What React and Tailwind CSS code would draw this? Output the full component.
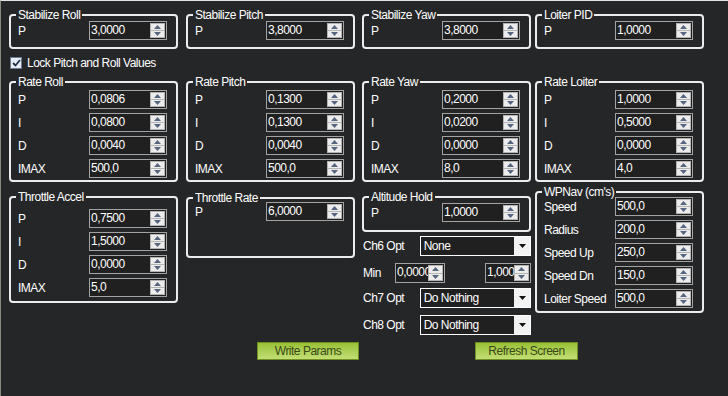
function Arrow({ up }) {
  return (
    <svg width="7" height="4" viewBox="0 0 7 4" className="block">
      <path d={up ? "M0 4 L3.5 0 L7 4 Z" : "M0 0 L3.5 4 L7 0 Z"} fill="#55657f" />
    </svg>
  );
}

function Spin({ value, w = "w-[78px]", h = "h-[19px]" }) {
  return (
    <div className={`flex ${w} ${h} shrink-0 border border-[#a3a3a3] bg-[#202020]`}>
      <span className="flex-1 overflow-hidden whitespace-nowrap pl-[1px] leading-[17px] text-white">{value}</span>
      <div className="my-[1px] mr-[1px] flex w-[15px] flex-col">
        <div className="flex flex-1 items-center justify-center border border-[#b4b4b4] bg-[#ececec]">
          <Arrow up />
        </div>
        <div className="flex flex-1 items-center justify-center border border-t-0 border-[#b4b4b4] bg-[#ececec]">
          <Arrow />
        </div>
      </div>
    </div>
  );
}

function Row({ label, value }) {
  return (
    <div className="flex items-center">
      <span className="w-[73px] pl-[2px]">{label}</span>
      <Spin value={value} />
    </div>
  );
}

function Group({ title, className = "", children }) {
  return (
    <fieldset className={`w-[169px] shrink-0 rounded-[4px] border-2 border-[#ececec] pl-[5px] pr-[9px] ${className}`}>
      <legend className="px-[2px] leading-[12px]">{title}</legend>
      {children}
    </fieldset>
  );
}

function Select({ value }) {
  return (
    <div className="flex h-[20px] w-[112px] border border-white bg-[#202020]">
      <span className="flex-1 pl-[3px] leading-[18px]">{value}</span>
      <div className="flex w-[16px] items-center justify-center bg-[#f2f2f2]">
        <svg width="7" height="4" viewBox="0 0 7 4">
          <path d="M0 0 L3.5 4 L7 0 Z" fill="#111111" />
        </svg>
      </div>
    </div>
  );
}

function GreenButton({ children, className = "" }) {
  return (
    <div
      className={`h-[18px] border border-[#6f8f24] bg-linear-to-b from-[#98c133] to-[#c3de74] text-center leading-[16px] text-[#3c4a1a] ${className}`}
    >
      {children}
    </div>
  );
}

export default function App() {
  return (
    <div className="h-[396px] w-[728px] overflow-hidden border-l border-t border-l-[#8a8a80] border-t-[#e4e4e4] bg-[#252628] font-['Liberation_Sans',Arial,sans-serif] text-[12px] tracking-[-0.5px] text-white">
      <div className="pl-[8px]">
        {/* stabilize row */}
        <div className="flex pt-[8px]">
          <Group title="Stabilize Roll" className="h-[40px]">
            <Row label="P" value="3,0000" />
          </Group>
          <Group title="Stabilize Pitch" className="ml-[8px] h-[40px]">
            <Row label="P" value="3,8000" />
          </Group>
          <Group title="Stabilize Yaw" className="ml-[7px] h-[40px]">
            <Row label="P" value="3,8000" />
          </Group>
          <Group title="Loiter PID" className="ml-[4px] h-[40px]">
            <Row label="P" value="1,0000" />
          </Group>
        </div>

        {/* lock checkbox */}
        <div className="ml-[1px] mt-[8px] flex h-[12px] items-center gap-[5px]">
          <div className="flex h-[12px] w-[12px] items-center justify-center border border-[#6c7a92] bg-[#e8eef6]">
            <svg width="9" height="8" viewBox="0 0 9 8">
              <path d="M1 4 L3.5 6.5 L8 1" stroke="#23304a" strokeWidth="1.8" fill="none" />
            </svg>
          </div>
          <span>Lock Pitch and Roll Values</span>
        </div>

        {/* rate row */}
        <div className="mt-[7px] flex">
          {[
            ["Rate Roll", ["0,0806", "0,0800", "0,0040", "500,0"], ""],
            ["Rate Pitch", ["0,1300", "0,1300", "0,0040", "500,0"], "ml-[8px]"],
            ["Rate Yaw", ["0,2000", "0,0200", "0,0000", "8,0"], "ml-[7px]"],
            ["Rate Loiter", ["1,0000", "0,5000", "0,0000", "4,0"], "ml-[4px]"],
          ].map(([title, vals, cls]) => (
            <Group key={title} title={title} className={`h-[106px] ${cls}`}>
              <div className="flex flex-col gap-[4px] pt-[2px]">
                <Row label="P" value={vals[0]} />
                <Row label="I" value={vals[1]} />
                <Row label="D" value={vals[2]} />
                <Row label="IMAX" value={vals[3]} />
              </div>
            </Group>
          ))}
        </div>

        {/* bottom row */}
        <div className="flex items-start">
          <Group title="Throttle Accel" className="mt-[9px] h-[112px]">
            <div className="flex flex-col gap-[4px] pt-[6px]">
              <Row label="P" value="0,7500" />
              <Row label="I" value="1,5000" />
              <Row label="D" value="0,0000" />
              <Row label="IMAX" value="5,0" />
            </div>
          </Group>

          <Group title="Throttle Rate" className="ml-[8px] mt-[10px] h-[66px]">
            <div className="-mt-[2px]">
              <Row label="P" value="6,0000" />
            </div>
          </Group>

          <div className="ml-[7px] mt-[9px] w-[169px] shrink-0">
            <Group title="Altitude Hold" className="h-[41px]">
              <Row label="P" value="1,0000" />
            </Group>
            <div className="mt-[4px] flex items-center">
              <span className="w-[58px] pl-[1px]">Ch6 Opt</span>
              <Select value="None" />
            </div>
            <div className="mt-[7px] flex items-center">
              <span className="w-[34px] pl-[1px]">Min</span>
              <Spin value="0,0000" w="w-[50px]" h="h-[20px]" />
              <Spin value="1,000" w="w-[46px] ml-[40px]" h="h-[20px]" />
            </div>
            <div className="mt-[5px] flex items-center">
              <span className="w-[58px] pl-[1px]">Ch7 Opt</span>
              <Select value="Do Nothing" />
            </div>
            <div className="mt-[7px] flex items-center">
              <span className="w-[58px] pl-[1px]">Ch8 Opt</span>
              <Select value="Do Nothing" />
            </div>
          </div>

          <Group title="WPNav (cm's)" className="ml-[4px] mt-[4px] h-[127px]">
            <div className="-mt-[1px] flex flex-col gap-[4px]">
              <Row label="Speed" value="500,0" />
              <Row label="Radius" value="200,0" />
              <Row label="Speed Up" value="250,0" />
              <Row label="Speed Dn" value="150,0" />
              <Row label="Loiter Speed" value="500,0" />
            </div>
          </Group>
        </div>

        {/* buttons */}
        <div className="mt-[7px] flex">
          <GreenButton className="ml-[248px] w-[102px]">Write Params</GreenButton>
          <GreenButton className="ml-[116px] w-[103px]">Refresh Screen</GreenButton>
        </div>
      </div>
    </div>
  );
}
